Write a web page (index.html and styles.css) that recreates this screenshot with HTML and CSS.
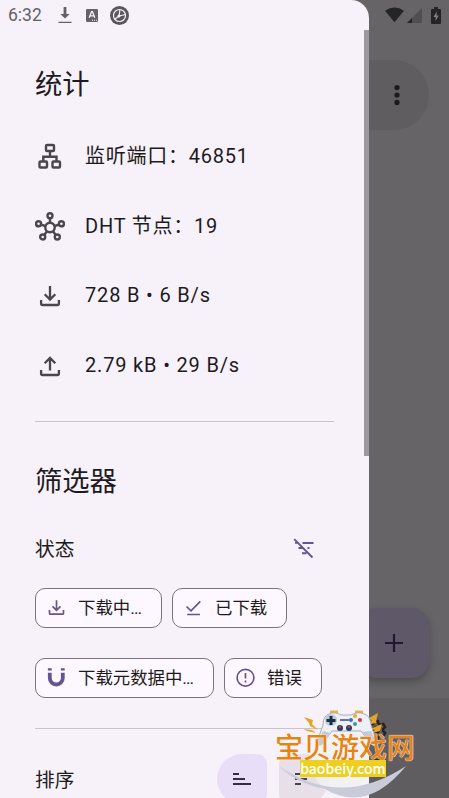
FILE: index.html
```html
<!DOCTYPE html>
<html lang="zh-CN">
<head>
<meta charset="utf-8">
<title>统计</title>
<link rel="stylesheet" href="styles.css">
</head>
<body>
<div class="screen">
  <main class="app">
    <div class="searchbar">
      <svg width="6" height="20" viewBox="0 0 6 20" fill="#1b1a1d"><circle cx="3" cy="2.6" r="2.6"/><circle cx="3" cy="10" r="2.6"/><circle cx="3" cy="17.4" r="2.6"/></svg>
    </div>
    <div class="fab">
      <svg width="18" height="18" viewBox="0 0 18 18" stroke="#21182f" stroke-width="2.2"><path d="M9 0v18M0 9h18"/></svg>
    </div>
    <nav class="bottom-nav">
      <svg width="22" height="22" viewBox="0 0 24 24" fill="none" stroke="#242326" stroke-width="2.6"><path d="M10 2h4l.7 3 2.3 1.3 3-.9 2 3.4-2.2 2.2v2l2.2 2.2-2 3.4-3-.9-2.3 1.3-.7 3h-4l-.7-3L7 17.7l-3 .9-2-3.4L4.200 13v-2L2 8.800l2-3.400 3 .9L9.300 5z"/><circle cx="12" cy="12" r="3"/></svg>
      <span>设置</span>
    </nav>
  </main>

  <aside class="drawer">
    <div class="scrollbar"></div>
    <section class="stats">
      <h2>统计</h2>
      <div class="stat">
        <svg width="30" height="30" viewBox="0 0 30 30" fill="none" stroke="#49464d" stroke-width="2.4"><rect x="11" y="4" width="8" height="6" rx="1"/><rect x="4.500" y="20.500" width="7.500" height="6" rx="1"/><rect x="17.500" y="20.500" width="7.500" height="6" rx="1"/><path d="M15 10v5M8.300 20.500v-4.700h13.200v4.700"/></svg>
        <span class="mixed">监听端口：46851</span>
      </div>
      <div class="stat">
        <svg width="30" height="30" viewBox="0 0 30 30" fill="none" stroke="#49464d" stroke-width="2.400"><circle cx="15" cy="16.500" r="4.700"/><circle cx="15" cy="4.700" r="2.500"/><circle cx="3.600" cy="12.800" r="2.500"/><circle cx="26.400" cy="12.800" r="2.500"/><circle cx="7.700" cy="26" r="2.500"/><circle cx="22.300" cy="26" r="2.500"/><path d="M15 7.200v4.600M6 13.600l4.300 1.400M24 13.600l-4.300 1.400M9.200 24l2.900-3.800M20.800 24l-2.900-3.800"/></svg>
        <span class="mixed">DHT 节点：19</span>
      </div>
      <div class="stat">
        <svg width="30" height="30" viewBox="0 0 30 30" fill="none" stroke="#49464d" stroke-width="2.300"><path d="M15 5v13M9.700 13.200l5.300 5.300 5.300-5.300M6.100 19v3.500q0 1.500 1.500 1.500h14.800q1.500 0 1.500-1.500V19"/></svg>
        <span>728 B • 6 B/s</span>
      </div>
      <div class="stat">
        <svg width="30" height="30" viewBox="0 0 30 30" fill="none" stroke="#49464d" stroke-width="2.300"><path d="M15 19.500v-12M9.700 12.300L15 7l5.300 5.300M6.100 19v3.500q0 1.500 1.500 1.500h14.800q1.500 0 1.500-1.500V19"/></svg>
        <span>2.79 kB • 29 B/s</span>
      </div>
    </section>

    <section class="filters">
      <h2>筛选器</h2>
      <div class="group-head">
        <h3>状态</h3>
        <svg width="22" height="22" viewBox="0 0 22 22" fill="none" stroke="#65558f" stroke-width="1.900"><path d="M1.200 1.200l18.300 18.300M9.500 5h11M5.500 10H10M14.500 10h2M9 15.200h4.500M2 4.900h2.500"/></svg>
      </div>
      <div class="chips">
        <div class="chip downloading">
          <svg width="22" height="22" viewBox="0 0 22 22" fill="none" stroke="#65558f" stroke-width="1.700"><path d="M10.500 3.300v9.500M6.500 9.300l4 4 4-4M3.500 13v3.200q0 1 1 1h12q1 0 1-1V13"/></svg>
          <span>下载中…</span>
        </div>
        <div class="chip downloaded">
          <svg width="22" height="22" viewBox="0 0 22 22" fill="none" stroke="#65558f" stroke-width="1.700"><path d="M3.500 9.500L8 13.800l9.300-9.400M4.200 17.500h12.800"/></svg>
          <span>已下载</span>
        </div>
        <div class="chip metadata">
          <svg width="22" height="22" viewBox="0 0 22 22" fill="none" stroke="#65558f" stroke-width="3.800"><path d="M3.800 5.800V11a6.500 6.500 0 0 0 13 0V5.800M3.800 1.300v2.300M16.800 1.300v2.300"/></svg>
          <span>下载元数据中…</span>
        </div>
        <div class="chip error">
          <svg width="22" height="22" viewBox="0 0 22 22" fill="none" stroke="#65558f" stroke-width="1.700"><circle cx="10.500" cy="10.700" r="8.400"/><path d="M10.500 6v5.500M10.500 13.500v1.900"/></svg>
          <span>错误</span>
        </div>
      </div>
    </section>

    <section class="sorting">
      <h3>排序</h3>
      <div class="segments">
        <div class="segment active">
          <svg width="20" height="14" viewBox="0 0 20 14" stroke="#352d43" stroke-width="2"><path d="M1 2h6M1 7h12M1 12h18"/></svg>
        </div>
        <div class="segment">
          <svg width="20" height="14" viewBox="0 0 20 14" stroke="#47434c" stroke-width="2"><path d="M1 2h18M1 7h12M1 12h6"/></svg>
        </div>
      </div>
    </section>
  </aside>

  <header class="statusbar">
    <span class="clock">6:32</span>
    <svg class="status-download" width="14" height="17" viewBox="0 0 14 17"><path d="M5.600 0h2.800v7h3.300L7 11.500 2.300 7h3.300zM.5 14.800h13v1.300H.5z" fill="#646266"/></svg>
    <svg class="status-input" width="12" height="13" viewBox="0 0 12 13"><rect width="12" height="13" rx="1.300" fill="#646266"/><path d="M3.200 8.800L5.600 2.600h.8l2.400 6.200M4.200 6.800h3.600" fill="none" stroke="#f7f1fa" stroke-width="1.300"/><path d="M6 11.300h1M8 11.300h1M10 11.300h1" stroke="#f7f1fa"/></svg>
    <svg class="status-wheel" width="19" height="19" viewBox="0 0 19 19" fill="none" stroke="#f7f1fa"><circle cx="9.500" cy="9.500" r="9.500" fill="#59575b" stroke="none"/><circle cx="9.500" cy="9.500" r="6" stroke-width="1.200"/><path d="M9 10L10 3.500M9 10l6.500-1.500M9 10l-4.500 3.500" stroke-width="1.200"/><circle cx="9" cy="10" r="1.500" fill="#f7f1fa" stroke="none"/></svg>
    <div class="system">
      <svg width="19" height="16" viewBox="0 0 20 16"><path d="M0 3.600Q10-3.400 20 3.600L10 15.500z" fill="#252426"/></svg>
      <svg width="15" height="15" viewBox="0 0 15 15"><path d="M15 0v15H0z" fill="#504e51"/><path d="M5 10v5H0z" fill="#252426"/></svg>
      <svg width="10" height="17" viewBox="0 0 10 17"><path d="M3 0h4v2h2q1 0 1 1v13q0 1-1 1H1q-1 0-1-1V3q0-1 1-1h2z" fill="#252426"/><path d="M5.700 4.500L2.600 10h2v4l3-5.500h-2z" fill="#848285"/></svg>
    </div>
  </header>

  <div class="watermark">
    <svg class="mascot" width="140" height="92" viewBox="0 0 140 92">
      <ellipse cx="65" cy="53" rx="28" ry="37" fill="#f0f2f3" opacity=".75"/>
      <path d="M4 60Q66 103 131 60Q92 108 50 83 22 78 4 60z" fill="#c9ccd8"/>
      <path d="M29 11l9 3-1 4 6 6-8-4-1-3zM29 23l8 1 4 3-9-2zM103 7l-9 5 3 3-6 4 10-2 1-6zM107 18l-12 5 5 1-6 4 11-3z" fill="#e6a426"/>
      <path d="M55 6h8M80 6h8" stroke="#edb52d" stroke-width="3"/>
      <path d="M54 8q5-3 12 1h10q7-4 13-1 6 1 7 11l6 18q-2 5-7 0l-9-12H57l-9 12q-5 4-6-1l6-17q0-9 6-11z" fill="#edf0f5" stroke="#a7adbd"/>
      <path d="M48 25l-6 12q1 5 6 1l8-11M96 25l6 13q-2 4-7-1l-8-11" fill="#c5cad6"/>
      <circle cx="56" cy="14" r="6" fill="#c1ccd7"/><path d="M56 10v9M51.500 14.500h9" stroke="#182e49" stroke-width="3"/>
      <circle cx="65" cy="22" r="3" fill="#263f63"/><circle cx="74" cy="22" r="3" fill="#263f63"/><circle cx="65" cy="21" r="1.200" fill="#c63c46"/><circle cx="74" cy="21" r="1.200" fill="#c63c46"/>
      <path d="M65 14h9" stroke="#66768c" stroke-width="2"/>
      <circle cx="80" cy="10" r="2" fill="#dfb136"/><circle cx="85" cy="14" r="2" fill="#d63549"/><circle cx="76" cy="14" r="2" fill="#3e6dc4"/><circle cx="80" cy="18" r="2" fill="#37a17d"/>
    </svg>
    <div class="brand">宝贝游戏网</div>
    <div class="domain">baobeiy.com</div>
  </div>
</div>
</body>
</html>
```
FILE: styles.css
```css
* { box-sizing: border-box; }

body {
  margin: 0;
  font-family: Roboto, "Noto Sans CJK SC", sans-serif;
  color: #1d1b20;
}

svg { display: block; flex: none; }

h2, h3 { margin: 0; font-weight: 400; }

.screen {
  position: relative;
  width: 449px;
  height: 798px;
  overflow: hidden;
  background: #666467;
}

/* Dimmed page behind the drawer */
.app {
  height: 100%;
  display: flex;
  flex-direction: column;
  align-items: flex-end;
  padding-top: 60px;
}

.searchbar {
  width: 409px;
  height: 70px;
  margin-right: 20px;
  padding-right: 29px;
  border-radius: 35px;
  background: #5f5d60;
  display: flex;
  align-items: center;
  justify-content: flex-end;
}

.fab {
  width: 70px;
  height: 70px;
  margin: auto 20px 20px 0;
  border-radius: 18px;
  background: #5e5868;
  box-shadow: 0 4px 9px rgba(0, 0, 0, .25);
  display: grid;
  place-items: center;
}

.bottom-nav {
  width: 100%;
  height: 100px;
  flex: none;
  padding: 21px 62px 0 0;
  background: #5f5d60;
  color: #242326;
  display: flex;
  flex-direction: column;
  align-items: flex-end;
  gap: 14px;
  font-size: 14px;
}

.drawer {
  position: absolute;
  inset: 0 auto 0 0;
  width: 369px;
  padding: 49px 35px 0;
  overflow: hidden;
  border-radius: 0 18px 0 0;
  background: #f7f1fa;
}

.scrollbar {
  position: absolute;
  top: 30px;
  right: 0;
  width: 5px;
  height: 426px;
  background: #9c99a0;
}

.drawer h2 {
  height: 72px;
  line-height: 73px;
  font-size: 27.3px;
}

.drawer h3 { font-size: 19.7px; }

.stats {
  height: 373px;
  border-bottom: 1px solid #cac4d0;
}

.stat {
  height: 70px;
  display: flex;
  align-items: center;
  gap: 20px;
  font-size: 20px;
  letter-spacing: .83px;
  white-space: nowrap;
}

.stat span { padding-bottom: 2px; }
.stat .mixed { padding-bottom: 4px; letter-spacing: .76px; }

.filters {
  height: 307px;
  padding-top: 24px;
  border-bottom: 1px solid #cac4d0;
}

.group-head {
  height: 70px;
  padding: 0 19px 8px 0;
  display: flex;
  align-items: center;
  justify-content: space-between;
}

.group-head h3 { padding-bottom: 4px; }

.chips {
  display: flex;
  flex-wrap: wrap;
  gap: 30px 10px;
}

.chip {
  height: 40px;
  padding-left: 10px;
  border: 1px solid #79747e;
  border-radius: 10px;
  background: #fdf7ff;
  display: flex;
  align-items: center;
  gap: 10px;
  font-size: 17.4px;
  white-space: nowrap;
}

.chip span { padding-bottom: 3px; }

.downloading { width: 127px; }
.downloaded { width: 115px; }
.metadata { width: 179px; }
.error { width: 98px; }

.sorting {
  padding-top: 25px;
  display: flex;
  justify-content: space-between;
}

.sorting h3 { line-height: 53px; }

.segments { display: flex; gap: 12px; margin-right: 5px; }

.segment {
  width: 50px;
  height: 50px;
  border-radius: 10px 25px 25px 10px;
  background: #e7e0e8;
  display: grid;
  place-items: center;
}

.segment.active {
  border-radius: 25px 10px 10px 25px;
  background: #e8def8;
}

.statusbar {
  position: absolute;
  inset: 0 0 auto;
  height: 30px;
  padding: 0 8px;
  display: flex;
  align-items: center;
}

.clock { width: 50px; font-size: 17.5px; color: #646266; }
.status-input { margin-left: 14px; }
.status-wheel { margin-left: 12px; }

.system {
  margin-left: auto;
  display: flex;
  align-items: center;
  gap: 3px;
}

.system svg:last-child { margin-left: 6px; }

/* Site mark laid over the page */
.watermark {
  position: absolute;
  top: 706px;
  left: 275px;
  width: 140px;
  height: 92px;
  padding-top: 27px;
}

.mascot { position: absolute; inset: 0; }

.brand, .domain { position: relative; white-space: nowrap; }

.brand {
  height: 27px;
  line-height: 27px;
  font-family: "Noto Sans CJK SC", sans-serif;
  font-size: 28px;
  font-weight: 500;
  color: #e58413;
  text-shadow: 0 0 1px #fff, 0 0 1px #fff;
}

.domain {
  width: 86px;
  height: 17px;
  margin-left: 25px;
  background: #edd01f;
  color: #fff;
  font: 500 14px/16px "Noto Sans CJK SC", sans-serif;
  text-align: center;
}
```
